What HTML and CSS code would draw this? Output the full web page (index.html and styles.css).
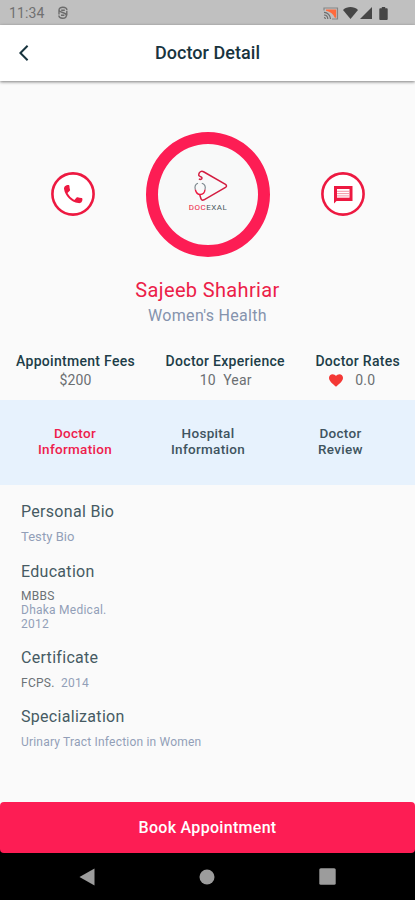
FILE: index.html
```html
<!DOCTYPE html>
<html lang="en">
<head>
<meta charset="utf-8">
<title>Doctor Detail</title>
<link rel="stylesheet" href="styles.css">
</head>
<body>
<div class="screen">
  <div class="status">
    <span class="clock">11:34</span>
    <svg class="s-app" width="12" height="14" viewBox="0 0 12 14" fill="none" stroke="#6c6c6c" stroke-width="1.4"><path d="M10 4.2C9.6 .3 2 .3 2 4c0 3.2 7.400 1.800 7.400 5.200 0 4-7.200 4-7.600.3M2 4v4.500M9.800 5v4.500M4.200 4.300h3.600M4 9.200h3.400"/></svg>
    <div class="status-icons">
      <svg width="16" height="13" viewBox="0 0 16 13"><path d="M1 3.500V1h13.500v11H9" fill="none" stroke="#858585" stroke-width="1.200"/><path d="M3 2.400h10.200v8.300h-1.400C10.500 7.200 7.500 4.600 3 3.800z" fill="#ff6a3c"/><path d="M1 5.300a6.800 6.800 0 0 1 6.500 6.700M1 8a4 4 0 0 1 3.800 4M1 10.500a1.500 1.500 0 0 1 1.400 1.500" fill="none" stroke="#6c6c6c" stroke-width="1.200"/></svg>
      <svg width="15" height="12" viewBox="0 0 15 12"><path d="M0 2.900C4.200-.8 10.800-.8 15 2.900L7.500 12z" fill="#464646"/></svg>
      <svg class="signal" width="12" height="12" viewBox="0 0 12 12"><path d="M12 0v12H0z" fill="#464646"/></svg>
      <svg class="battery" width="9" height="13" viewBox="0 0 9 13"><path d="M2.800 0h3.400v1.300h1.600q.9 0 .9.900v9.900q0 .9-.9.900H1.200q-.9 0-.9-.9V2.200q0-.9.900-.9h1.600z" fill="#464646"/></svg>
    </div>
  </div>
  <header class="bar">
    <svg class="back" width="12" height="18" viewBox="0 0 12 18" fill="none" stroke="#18343e" stroke-width="2"><path d="M9.600 1.700 2.400 9l7.200 7.300"/></svg>
    <h1>Doctor Detail</h1>
  </header>
  <section class="hero">
    <svg width="44" height="44" viewBox="0 0 44 44"><circle cx="22" cy="22" r="20.600" fill="#fff" stroke="#ed1941" stroke-width="2.600"/><path transform="translate(9.600 9.800) scale(1.040)" d="M6.620 10.790c1.440 2.830 3.760 5.140 6.590 6.590l2.200-2.200c.270-.270.670-.360 1.020-.240 1.120.370 2.330.570 3.570.570.550 0 1 .450 1 1C21 18.500 20 21 17 20.500 10 19.500 4.500 14 3.300 7 3 4.500 5 3 7.500 3c.550 0 1 .450 1 1 0 1.250.200 2.450.570 3.570.110.350.030.740-.250 1.020z" fill="#ed1941"/></svg>
    <div class="avatar">
      <svg width="40" height="32" viewBox="0 0 40 32" fill="none">
        <path d="M11 8.800c1.500 1.500 3.800 0 2.600-1.500-1.200-1.300-3.400-.8-2.900-2.800C11.300 1.500 13.500.6 16 2l21.500 12.400q2 1.500 0 3L16 29.800q-2.400 1-3-1L11.800 25" stroke="#d31d40" stroke-width="1.500"/>
        <path d="M7.300 19.500c.8 3.500 2.400 5 4.900 5s4.500-2 4.800-5" stroke="#ed1941" stroke-width="1.400"/>
        <path d="M7.300 19.500Q6 14.500 10 13.200M13.800 13.200q4.500 1.500 3.200 6.300" stroke="#77848a" stroke-width="1.100"/>
      </svg>
      <div class="brand"><span>DOC</span>EXAL</div>
    </div>
    <svg width="44" height="44" viewBox="0 0 44 44"><circle cx="22" cy="22" r="20.600" fill="#fff" stroke="#ed1941" stroke-width="2.600"/><path d="M13 31.500V14h18.500v15H15.500z" fill="#ed1941"/><path d="M16 17h12.500v8.700H16z" fill="#fff"/><path d="M16 19.300h12.500M16 21.600h12.500M16 23.900h12.500" stroke="#f3899c" stroke-width=".9"/></svg>
  </section>
  <h2 class="name">Sajeeb Shahriar</h2>
  <p class="field">Women's Health</p>
  <section class="stats">
    <div><b>Appointment Fees</b><span>$200</span></div>
    <div><b>Doctor Experience</b><span class="years">10&nbsp; Year</span></div>
    <div><b>Doctor Rates</b><span class="rate"><svg width="14" height="13" viewBox="0 0 14 13"><path d="M7 12.800C3 9.400 0 7 0 3.800 0 1.700 1.600.2 3.600.2 5 .2 6.200.9 7 2 7.800.9 9 .2 10.400.2 12.400.2 14 1.700 14 3.800 14 7 11 9.400 7 12.800z" fill="#f43835"/></svg>0.0</span></div>
  </section>
  <nav class="tabs">
    <a class="on">Doctor<br>Information</a>
    <a>Hospital<br>Information</a>
    <a>Doctor<br>Review</a>
  </nav>
  <main class="info">
    <h3>Personal Bio</h3>
    <p class="bio">Testy Bio</p>
    <h3>Education</h3>
    <p class="edu"><em>MBBS</em><br><span class="school">Dhaka Medical.</span><br>2012</p>
    <h3>Certificate</h3>
    <p class="cert"><em>FCPS.</em>&nbsp; 2014</p>
    <h3>Specialization</h3>
    <p class="spec">Urinary Tract Infection in Women</p>
  </main>
  <div class="book"><button>Book Appointment</button></div>
  <div class="navbar">
    <svg width="16" height="18" viewBox="0 0 16 18"><path d="M15.500.5v17L.5 9z" fill="#9c9c9c"/></svg>
    <svg width="16" height="16" viewBox="0 0 16 16"><circle cx="8" cy="8" r="7.500" fill="#9c9c9c"/></svg>
    <svg width="17" height="17" viewBox="0 0 17 17"><rect x=".3" y=".3" width="16.400" height="16.400" rx="1.500" fill="#9c9c9c"/></svg>
  </div>
</div>
</body>
</html>
```

FILE: styles.css
```css
* { box-sizing: border-box; }
body { margin: 0; font-family: Roboto, sans-serif; background: #fafafa; color: #29434e; }
h1, h2, h3, p { margin: 0; font-weight: 400; }
svg { display: block; flex: none; }
.screen { width: 415px; height: 900px; display: flex; flex-direction: column; overflow: hidden; }
.screen > * { flex: none; }

.status { height: 25px; background: #c0c0c0; display: flex; align-items: center; padding: 1px 27px 0 9px; }
.clock { font-size: 14px; letter-spacing: .1px; color: #707070; width: 48px; line-height: 24px; }
.status-icons { margin-left: auto; display: flex; align-items: center; }
.status-icons svg:nth-child(2) { margin-left: 4px; }
.signal { margin-left: 2px; }
.battery { margin-left: 7px; }

.bar { height: 56px; background: #fff; display: grid; grid-template-columns: 48px 1fr 48px; align-items: center; box-shadow: 0 1px 3px rgba(0, 0, 0, .5); }
.back { margin-left: 18px; }
.bar h1 { font-size: 18px; line-height: 24px; font-weight: 500; text-align: center; letter-spacing: .05px; color: #18343e; }

.hero { height: 176px; padding: 51px 50px 0 51px; display: flex; align-items: flex-start; justify-content: space-between; }
.hero > svg { margin-top: 40px; }
.avatar { width: 124px; height: 125px; border: 12px solid #fd1d54; border-radius: 50%; background: #f8f9f9; display: flex; flex-direction: column; align-items: center; padding-top: 26px; }
.brand { font-size: 8px; line-height: 10px; margin-top: 1px; letter-spacing: .5px; color: #4b5960; }
.brand span { color: #ed1941; }

.name { margin-top: 20px; font-size: 20px; line-height: 26px; letter-spacing: .35px; text-align: center; color: #ec2048; }
.field { font-size: 16px; line-height: 26px; letter-spacing: .3px; text-align: center; color: #8593ad; }

.stats { height: 71px; padding: 23px 15px 0 16px; display: flex; justify-content: space-between; }
.stats div { display: flex; flex-direction: column; align-items: center; }
.stats b { font-size: 14px; line-height: 19px; font-weight: 500; letter-spacing: .3px; color: #203d48; }
.stats span { font-size: 14px; line-height: 19px; color: #6b6f72; letter-spacing: .2px; }
.stats .years { padding-left: 1px; }
.stats .rate { display: flex; align-items: center; gap: 12px; padding-right: 11px; }

.tabs { height: 85px; background: #e7f2fd; display: grid; grid-template-columns: 150px 116px 149px; align-items: center; padding-bottom: 3px; }
.tabs a { font-size: 13.5px; line-height: 16px; font-weight: 500; letter-spacing: .3px; text-align: center; color: #40545f; }
.tabs .on { color: #ee204c; }

.info { height: 317px; padding: 15px 21px 0; }
.info h3 { font-size: 16px; line-height: 24px; letter-spacing: .3px; color: #465a63; }
.info p { font-size: 12px; line-height: 14px; letter-spacing: .25px; color: #929fb8; }
.info em { font-style: normal; color: #6c7276; }
.info .bio { font-size: 13px; letter-spacing: .05px; margin: 6px 0 16px; }
.info .edu { margin: 5px 0 15px; }
.info .cert { margin: 6px 0 15px; }
.info .spec { margin-top: 6px; letter-spacing: .2px; }

.book { height: 51px; background: linear-gradient(#fafafa 50%, #000 50%); }
.book button { display: block; width: 100%; height: 51px; border: 0; border-radius: 4px; background: #fd1d54; color: #fff; font: 500 16px/24px Roboto, sans-serif; letter-spacing: .3px; padding: 0; }
.navbar { height: 47px; background: #000; display: flex; justify-content: space-between; align-items: center; padding: 0 79px; }
```
